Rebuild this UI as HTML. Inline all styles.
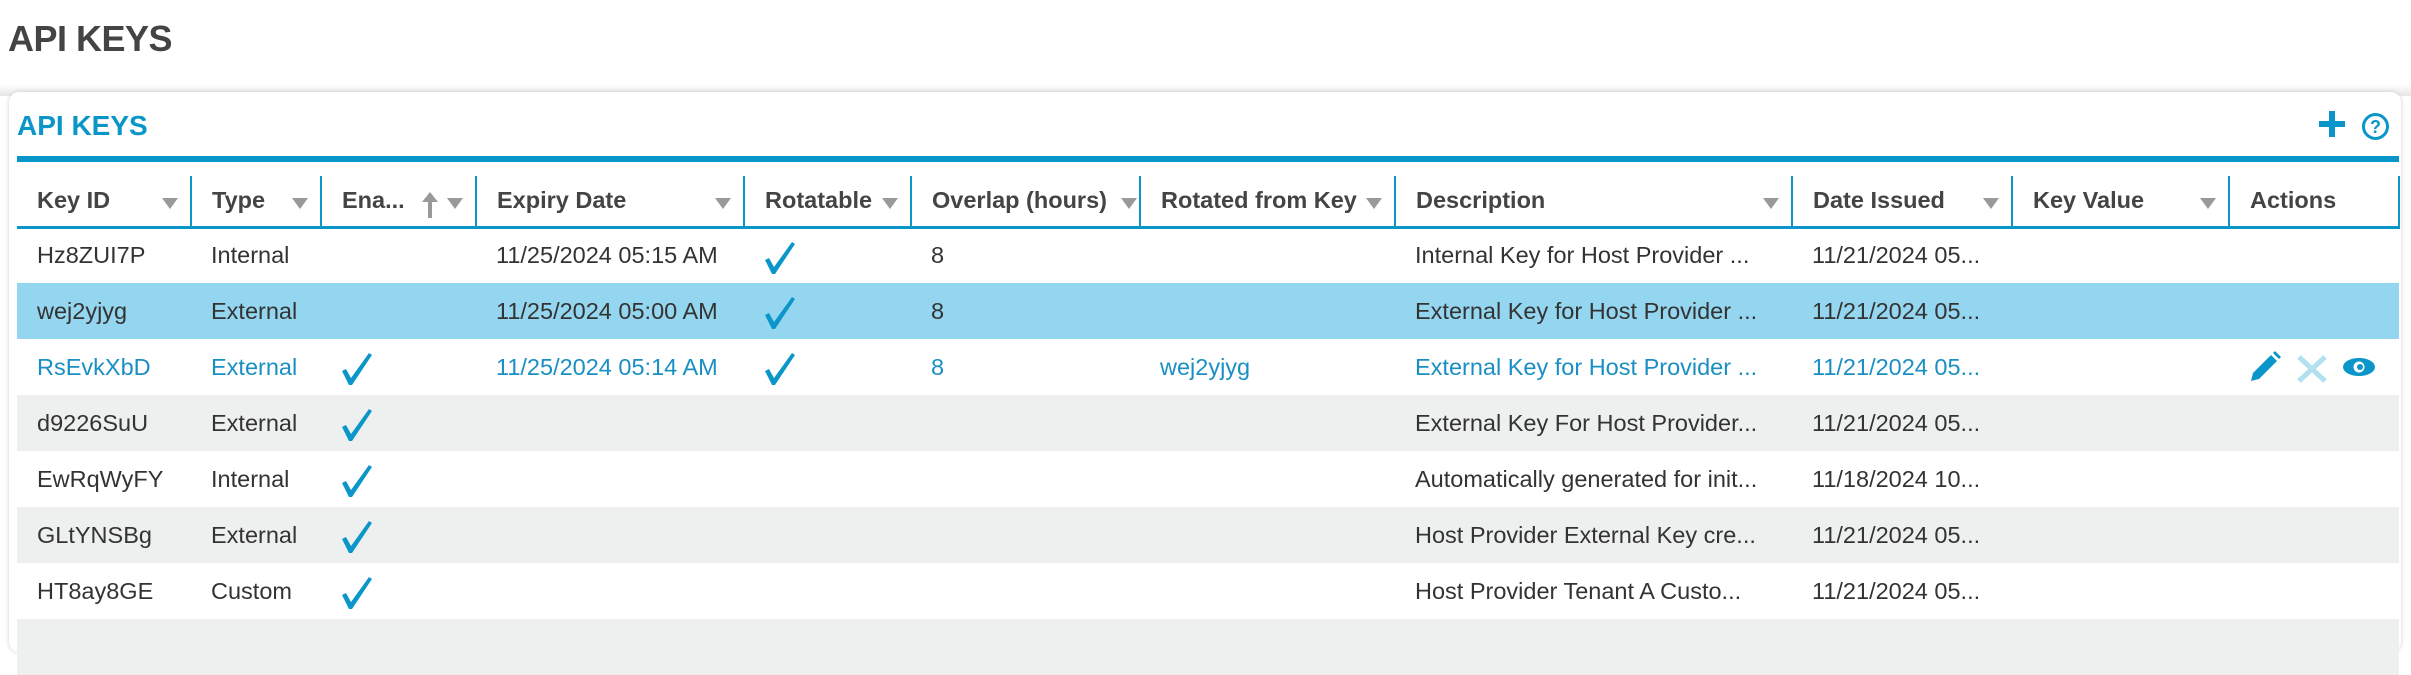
<!DOCTYPE html>
<html><head><meta charset="utf-8"><style>
*{margin:0;padding:0;box-sizing:border-box}
body{width:2411px;height:627px;overflow:hidden;background:#fff;font-family:"Liberation Sans",Arial,sans-serif;position:relative}
.title{position:absolute;left:8px;top:18px;font-size:36px;font-weight:bold;color:#444;letter-spacing:-0.5px}
.shadow{position:absolute;left:0;top:84px;width:2411px;height:12px;background:linear-gradient(#fff,#e6e6e6)}
.panel{position:absolute;left:9px;top:92px;width:2392px;height:560px;background:#fff;border-radius:10px;box-shadow:0 0 4px #ccc}
.h2{position:absolute;left:17px;top:110px;font-size:28px;font-weight:bold;color:#0a96c8}
.bar{position:absolute;left:17px;top:156px;width:2382px;height:6px;background:#0a96c8}
table{position:absolute;left:17px;top:176px;border-collapse:collapse;table-layout:fixed;width:2382px}
th{height:51px;text-align:left;font-size:23.5px;font-weight:bold;color:#444;border-left:2px solid #0a96c8;border-bottom:3px solid #0a96c8;padding-left:20px;position:relative;white-space:nowrap}
th:first-child{border-left:none}
th:last-child{border-right:2px solid #0a96c8}
th .f{position:absolute;right:12px;top:22px;width:0;height:0;border-left:8px solid transparent;border-right:8px solid transparent;border-top:11px solid #999}
td{height:56px;font-size:23.5px;color:#333;padding-left:20px;white-space:nowrap;overflow:hidden}
tr.g td{background:#eef0f0}
tr.s td{background:#94d6ef}
tr.b td{color:#1a8fc4}
.ck{display:inline-block;vertical-align:middle;margin-top:4px}
</style></head><body>
<div class="title">API KEYS</div>
<div class="shadow"></div>
<div class="panel"></div>
<div class="h2">API KEYS</div>
<svg style="position:absolute;left:2318px;top:110px" width="28" height="28"><rect x="11" y="1" width="6" height="26" fill="#0a96c8"/><rect x="1" y="11" width="26" height="6" fill="#0a96c8"/></svg>
<svg style="position:absolute;left:2361px;top:112px" width="29" height="29"><circle cx="14.5" cy="14.5" r="12" fill="none" stroke="#0a96c8" stroke-width="3"/><text x="14.5" y="21" font-size="18" font-weight="bold" fill="#0a96c8" text-anchor="middle" font-family="Liberation Sans">?</text></svg>
<div class="bar"></div>
<svg width="0" height="0" style="position:absolute"><defs><symbol id="c" viewBox="0 0 32 34"><path d="M1 19 L5 17 L10 26 L28 1 L31 3 L11 33 L8 33 Z" fill="#0a96c8"/></symbol></defs></svg>
<table>
<colgroup><col style="width:174px"><col style="width:130px"><col style="width:155px"><col style="width:268px"><col style="width:167px"><col style="width:229px"><col style="width:255px"><col style="width:397px"><col style="width:220px"><col style="width:217px"><col style="width:170px"></colgroup>
<tr><th>Key ID<span class="f"></span></th><th>Type<span class="f"></span></th><th>Ena...<svg style="position:absolute;left:100px;top:16px" width="16" height="26"><path d="M8 0 L16 10 L10 10 L10 26 L6 26 L6 10 L0 10 Z" fill="#999"/></svg><span class="f"></span></th><th>Expiry Date<span class="f"></span></th><th>Rotatable<span class="f"></span></th><th>Overlap (hours)<span class="f" style="right:2px"></span></th><th>Rotated from Key<span class="f"></span></th><th>Description<span class="f"></span></th><th>Date Issued<span class="f"></span></th><th>Key Value<span class="f"></span></th><th>Actions</th></tr>
<tr><td>Hz8ZUI7P</td><td>Internal</td><td></td><td>11/25/2024 05:15 AM</td><td><svg class="ck" width="32" height="34"><use href="#c"/></svg></td><td>8</td><td></td><td>Internal Key for Host Provider ...</td><td>11/21/2024 05...</td><td></td><td></td></tr>
<tr class="s"><td>wej2yjyg</td><td>External</td><td></td><td>11/25/2024 05:00 AM</td><td><svg class="ck" width="32" height="34"><use href="#c"/></svg></td><td>8</td><td></td><td>External Key for Host Provider ...</td><td>11/21/2024 05...</td><td></td><td></td></tr>
<tr class="b"><td>RsEvkXbD</td><td>External</td><td><svg class="ck" width="32" height="34"><use href="#c"/></svg></td><td>11/25/2024 05:14 AM</td><td><svg class="ck" width="32" height="34"><use href="#c"/></svg></td><td>8</td><td>wej2yjyg</td><td>External Key for Host Provider ...</td><td>11/21/2024 05...</td><td></td><td style="position:relative"><svg style="position:absolute;left:18px;top:10px" width="140" height="36"><path d="M4 32 L6 24 L24 6 L30 12 L12 30 Z" fill="#0a96c8"/><path d="M26 4 L28 2 L34 8 L32 10 Z" fill="#0a96c8"/><path d="M52 8 L78 32 M78 8 L52 32" stroke="#b3e0f0" stroke-width="5"/><ellipse cx="112" cy="18" rx="16" ry="9" fill="#0a96c8"/><circle cx="112" cy="18" r="5.5" fill="#fff"/><circle cx="113" cy="18" r="3" fill="#0a96c8"/></svg></td></tr>
<tr class="g"><td>d9226SuU</td><td>External</td><td><svg class="ck" width="32" height="34"><use href="#c"/></svg></td><td></td><td></td><td></td><td></td><td>External Key For Host Provider...</td><td>11/21/2024 05...</td><td></td><td></td></tr>
<tr><td>EwRqWyFY</td><td>Internal</td><td><svg class="ck" width="32" height="34"><use href="#c"/></svg></td><td></td><td></td><td></td><td></td><td>Automatically generated for init...</td><td>11/18/2024 10...</td><td></td><td></td></tr>
<tr class="g"><td>GLtYNSBg</td><td>External</td><td><svg class="ck" width="32" height="34"><use href="#c"/></svg></td><td></td><td></td><td></td><td></td><td>Host Provider External Key cre...</td><td>11/21/2024 05...</td><td></td><td></td></tr>
<tr><td>HT8ay8GE</td><td>Custom</td><td><svg class="ck" width="32" height="34"><use href="#c"/></svg></td><td></td><td></td><td></td><td></td><td>Host Provider Tenant A Custo...</td><td>11/21/2024 05...</td><td></td><td></td></tr>
<tr class="g"><td></td><td></td><td></td><td></td><td></td><td></td><td></td><td></td><td></td><td></td><td></td></tr>
</table>
</body></html>
